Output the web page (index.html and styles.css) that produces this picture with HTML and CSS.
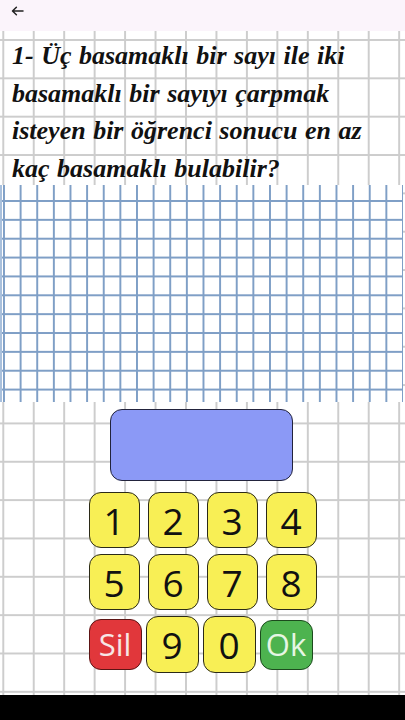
FILE: index.html
```html
<!DOCTYPE html>
<html lang="tr">
<head>
<meta charset="utf-8">
<title>Soru</title>
<link rel="stylesheet" href="styles.css">
</head>
<body>
<div class="screen">
  <header class="topbar">
    <svg class="back" width="13" height="10" viewBox="0 0 13 10" aria-hidden="true">
      <path d="M12 5H1.6M5.4 1.2L1.5 5l3.9 3.8" fill="none" stroke="#222" stroke-width="1.5" stroke-linecap="round" stroke-linejoin="round"/>
    </svg>
  </header>
  <p class="question">1- Üç basamaklı bir sayı ile iki<br>basamaklı bir sayıyı çarpmak<br>isteyen bir öğrenci sonucu en az<br>kaç basamaklı bulabilir?</p>
  <div class="scratch"></div>
  <div class="answer"></div>
  <div class="keypad">
    <div class="row">
      <button class="key">1</button>
      <button class="key">2</button>
      <button class="key">3</button>
      <button class="key">4</button>
    </div>
    <div class="row">
      <button class="key">5</button>
      <button class="key">6</button>
      <button class="key">7</button>
      <button class="key">8</button>
    </div>
    <div class="row row-last">
      <button class="key key-del">Sil</button>
      <button class="key key-tall">9</button>
      <button class="key key-tall">0</button>
      <button class="key key-ok">Ok</button>
    </div>
  </div>
</div>
<div class="navbar"></div>
</body>
</html>
```
FILE: styles.css
```css
html, body {
  margin: 0;
  padding: 0;
}
body {
  width: 405px;
  height: 720px;
  overflow: hidden;
  background: #000;
}
.screen {
  height: 695px;
  background-color: #fff;
  background-image:
    linear-gradient(to right, #cdcdcd 2px, transparent 2px),
    linear-gradient(to bottom, #cdcdcd 2px, transparent 2px);
  background-size: 30.46px 38.35px;
  background-position: 2.3px 39px;
  display: flex;
  flex-direction: column;
  align-items: stretch;
}
.topbar {
  height: 31px;
  flex: none;
  background: #fbf4fb;
  display: flex;
  align-items: flex-start;
  padding: 6px 0 0 11px;
  box-sizing: border-box;
}
.back {
  display: block;
}
.question {
  margin: 0;
  height: 154px;
  flex: none;
  box-sizing: border-box;
  padding: 6px 0 0 12px;
  font-family: "Liberation Serif", "DejaVu Serif", serif;
  font-weight: bold;
  font-style: italic;
  font-size: 26px;
  line-height: 37.5px;
  word-spacing: 1px;
  color: #111;
  white-space: nowrap;
}
.scratch {
  height: 217px;
  flex: none;
  margin-right: 2px;
  background-color: #fff;
  background-image:
    linear-gradient(to right, #7f9fc6 1.6px, transparent 1.6px),
    linear-gradient(to bottom, #7f9fc6 1.6px, transparent 1.6px);
  background-size: 16.625px 18.86px;
  background-position: 1px 15px;
  border-left: 2px solid #a9c0dc;
}
.answer {
  align-self: center;
  width: 183px;
  height: 72px;
  margin: 7px 0 0 -2px;
  box-sizing: border-box;
  background: #8b99f6;
  border: 1.5px solid #22233c;
  border-radius: 12px;
}
.keypad {
  margin-top: 11px;
  display: flex;
  flex-direction: column;
  align-items: center;
  gap: 6px;
}
.row {
  display: flex;
  align-items: center;
  gap: 8px;
}
.row-last {
  gap: 4px;
  margin-left: -4px;
}
.key {
  width: 51px;
  height: 56px;
  padding: 0;
  margin: 0;
  box-sizing: border-box;
  background: #f8ef55;
  border: 1.5px solid #2b2a18;
  border-radius: 12px;
  font-family: "Open Sans", "DejaVu Sans", sans-serif;
  font-weight: 500;
  font-size: 37px;
  line-height: 1;
  color: #111;
  display: flex;
  align-items: center;
  justify-content: center;
}
.key-tall {
  width: 53px;
  height: 57px;
}
.key-del {
  width: 53px;
  height: 51px;
  background: #e1373b;
  border-color: #5c1414;
  color: #f7e6e6;
  font-size: 31px;
  font-weight: 400;
}
.key-ok {
  width: 53px;
  height: 50px;
  background: #4db34f;
  border-color: #1c4a1d;
  color: #e6f6e4;
  font-size: 31px;
  font-weight: 400;
}
.navbar {
  height: 25px;
  background: #000;
}
```
